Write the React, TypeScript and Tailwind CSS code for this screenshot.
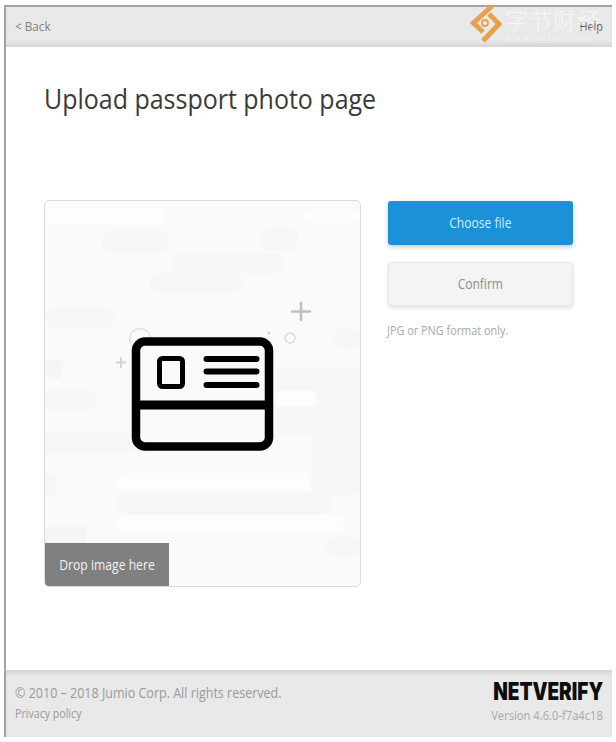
export default function App() {
  const os = { fontFamily: '"Open Sans", "Noto Sans CJK SC", sans-serif' };
  return (
    <div className="w-[616px] h-[742px] bg-white pt-[5px] pb-[5px] pl-[4px] pr-[4px] overflow-hidden" style={os}>
      <div className="h-full flex flex-col border-t-2 border-l-2 border-[#a3a3a3]">
        <header className="relative h-[40px] shrink-0 bg-[#e9e9e9] flex items-center justify-between pl-[9px] pr-[9px] shadow-[inset_0_-6px_5px_-3px_#d2d2d2]">
          <span className="text-[13px] origin-left scale-x-[0.9] text-[#808080]">&lt; Back</span>
          <span className="text-[12px] origin-right scale-x-[0.9] font-medium text-[#5c5c5c]">Help</span>
          <div className="absolute left-[464px] top-[-4px] flex items-center gap-[3px]">
            <svg width="32" height="42" viewBox="0 0 32 42" fill="none">
              <path d="M22 3 L3.500 20 L13 29" stroke="#e8a04c" strokeWidth="5" />
              <path d="M13 38 L29 21 L19 11" stroke="#e8a04c" strokeWidth="5" />
              <circle cx="15" cy="20" r="3" stroke="#e8a04c" strokeWidth="1.800" />
            </svg>
            <div className="flex flex-col items-start pt-[1px]">
              <span className="text-[23px] leading-[25px] tracking-[1px] text-white/60 font-light">字节财经</span>
              <span className="text-[8px] leading-[9px] tracking-[2.7px] text-white/55">www.zijie.com</span>
            </div>
          </div>
        </header>

        <main className="flex-1 min-h-0 pl-[38px]">
          <h1 className="mt-[33px] h-[36px] text-[28px] leading-[36px] font-medium text-[#3a3a3a] origin-left scale-x-[0.892] whitespace-nowrap">
            Upload passport photo page
          </h1>
          <div className="mt-[84px] flex items-start gap-[27px]">
            <div className="relative w-[317px] h-[387px] rounded-[5px] border border-[#dcdcdc] bg-[#fafafa] overflow-hidden">
              <svg className="absolute inset-0" width="316" height="386" viewBox="0 0 316 386" fill="none">
                <g fill="#fdfdfd">
                  <rect x="0" y="7" width="122" height="16" rx="8" />
                  <rect x="258" y="8" width="58" height="14" rx="7" />
                  <rect x="72" y="272" width="214" height="18" rx="9" />
                  <rect x="72" y="314" width="226" height="18" rx="9" />
                  <rect x="228" y="190" width="44" height="16" rx="8" />
                </g>
                <g fill="#f7f7f7">
                  <rect x="57" y="29" width="67" height="23" rx="11" />
                  <rect x="128" y="52" width="110" height="21" rx="10" />
                  <rect x="105" y="72" width="94" height="20" rx="10" />
                  <rect x="215" y="26" width="38" height="24" rx="10" />
                  <rect x="0" y="106" width="71" height="21" rx="10" />
                  <rect x="287" y="127" width="29" height="21" rx="10" />
                  <rect x="231" y="168" width="85" height="22" rx="4" />
                  <rect x="272" y="190" width="44" height="20" />
                  <rect x="266" y="232" width="50" height="62" rx="8" />
                  <rect x="232" y="206" width="84" height="28" rx="4" />
                  <rect x="0" y="188" width="52" height="22" rx="10" />
                  <rect x="0" y="232" width="90" height="20" />
                  <rect x="0" y="272" width="12" height="24" rx="8" />
                  <rect x="72" y="291" width="214" height="23" rx="11" />
                  <rect x="279" y="336" width="37" height="20" rx="10" />
                </g>
                <rect x="0" y="326" width="42" height="20" fill="#f4f6f6" />
                <rect x="0" y="158" width="18" height="20" rx="8" fill="#f4f6f6" />
                <path d="M256 102v17M247 110.500h18" stroke="#b9c0c8" strokeWidth="2.500" strokeLinecap="round" />
                <path d="M76 157v9M71.500 161.500h9" stroke="#d0d4d8" strokeWidth="2" strokeLinecap="round" />
                <circle cx="245" cy="137" r="5" stroke="#d8dbde" strokeWidth="1.500" />
                <circle cx="95" cy="138" r="10.500" stroke="#e2e2e2" strokeWidth="1.500" />
                <circle cx="224" cy="132" r="1.500" fill="#d0d4d8" />
                <circle cx="102" cy="182" r="1.500" fill="#d8dbde" />
                <rect x="91" y="140.500" width="133" height="105" rx="9" stroke="#000000" strokeWidth="8.500" fill="#fafafa" />
                <path d="M91 204h133" stroke="#000000" strokeWidth="9" />
                <rect x="114.500" y="157.500" width="23" height="28" rx="3" stroke="#000000" strokeWidth="5" />
                <path d="M161.500 158h50M161.500 170.500h50M161.500 184h50" stroke="#000000" strokeWidth="6" strokeLinecap="round" />
              </svg>
              <div className="absolute left-0 bottom-0 w-[124px] h-[43px] bg-[#808080] flex items-center justify-center text-[14px] pb-[1px] text-[#f2f2f2]">
                <span className="scale-x-[0.87] whitespace-nowrap">Drop image here</span>
              </div>
            </div>
            <div className="w-[185px] flex flex-col pt-[1px]">
              <button className="h-[44px] pb-[1px] rounded-[3px] bg-[#1c91d8] text-[#cfeafa] text-[14.5px] shadow-[0_2px_5px_rgba(0,0,0,0.22)]">
                <span className="inline-block scale-x-[0.835]">Choose file</span>
              </button>
              <button className="mt-[17px] h-[44px] pb-[1px] rounded-[3px] bg-[#f4f4f4] border border-[#e8e8e8] text-[#8e8e8e] text-[14.5px] shadow-[0_2px_4px_rgba(0,0,0,0.12)]">
                <span className="inline-block scale-x-[0.83]">Confirm</span>
              </button>
              <p className="mt-[16px] text-[12.5px] leading-[18px] text-[#a8a8a8] -ml-[1px] origin-left scale-x-[0.87] whitespace-nowrap">
                JPG or PNG format only.
              </p>
            </div>
          </div>
        </main>

        <footer className="h-[67px] shrink-0 bg-[#e9e9e9] flex justify-between pl-[9px] pr-[9px] shadow-[inset_0_6px_5px_-3px_#d2d2d2]">
          <div className="flex flex-col pt-[13px]">
            <span className="text-[14.5px] leading-[20px] text-[#9a9a9a] origin-left scale-x-[0.863] whitespace-nowrap">
              © 2010 – 2018 Jumio Corp. All rights reserved.
            </span>
            <span className="mt-[2px] text-[12.5px] leading-[17px] text-[#9a9a9a] origin-left scale-x-[0.85] whitespace-nowrap">Privacy policy</span>
          </div>
          <div className="flex flex-col items-end pt-[9px]">
            <span className="text-[24px] leading-[26px] font-black text-[#0d0d0d] origin-right scale-x-[0.79] whitespace-nowrap" style={{ fontFamily: 'Inter, sans-serif' }}>
              NETVERIFY
            </span>
            <span className="mt-[2px] text-[13px] leading-[17px] text-[#a8a8a8] origin-right scale-x-[0.86] whitespace-nowrap">Version 4.6.0-f7a4c18</span>
          </div>
        </footer>
      </div>
    </div>
  );
}
